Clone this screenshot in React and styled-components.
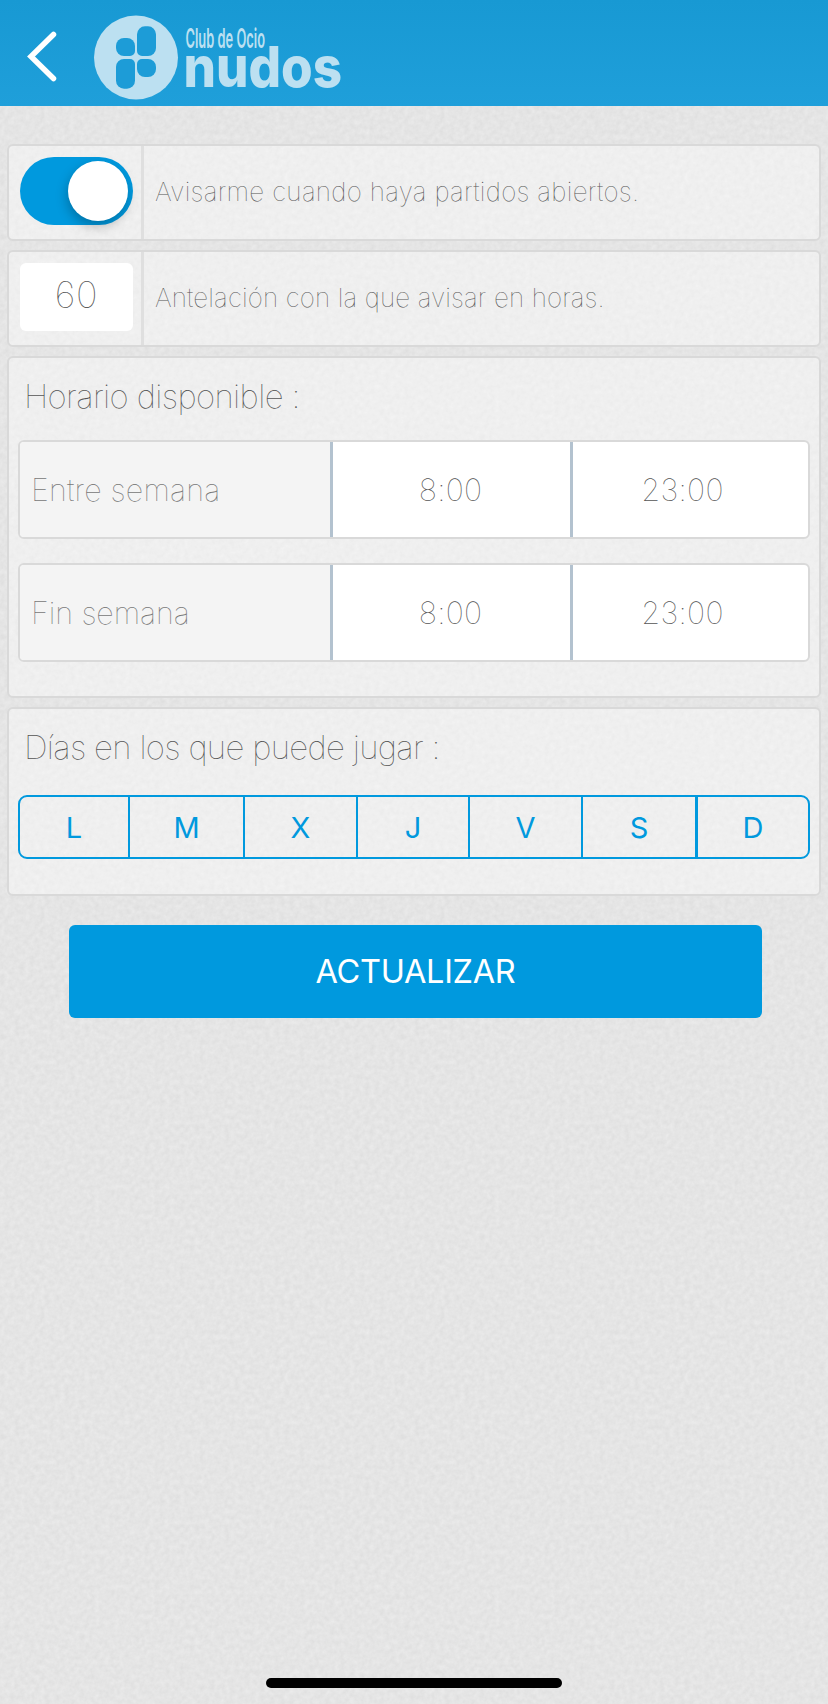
import React, { useState } from 'react';
import styled, { createGlobalStyle } from 'styled-components';

const paper = encodeURIComponent(
    `<svg xmlns="http://www.w3.org/2000/svg" width="400" height="400"><filter id="n" x="0" y="0" width="100%" height="100%" color-interpolation-filters="sRGB"><feTurbulence type="fractalNoise" baseFrequency=".2" numOctaves="3" stitchTiles="stitch"/><feColorMatrix values=".06 0 0 0 .867 .06 0 0 0 .867 .06 0 0 0 .867 0 0 0 0 1"/></filter><rect width="400" height="400" filter="url(#n)"/></svg>`
);

const GlobalStyle = createGlobalStyle`
    * {
        box-sizing: border-box;
    }
    body {
        margin: 0;
        background: #e5e5e5 url("data:image/svg+xml,${paper}");
        font-family: Inter, "Liberation Sans", sans-serif;
        color: #555;
    }
    button, input {
        font-family: inherit;
        margin: 0;
        padding: 0;
        border: 0;
        outline: 0;
        background: none;
    }
`
const Page = styled.div`
    width: 828px;
    height: 1704px;
    display: flex;
    flex-direction: column;
`
const Header = styled.header`
    height: 106px;
    display: flex;
    align-items: flex-start;
    background: linear-gradient(#1899d3, #1f9fda);
`
const BackButton = styled.button`
    width: 38px;
    height: 56px;
    margin: 28px 31px 0 24px;
    svg {
        display: block;
    }
`
const Logo = styled.svg`
    margin-top: 14px;
    overflow: visible;
`
const Content = styled.main`
    flex: 1;
    display: flex;
    flex-direction: column;
    gap: 9px;
    padding: 38px 7px 0;
`
const Card = styled.section`
    border: 2px solid #d9d9d9;
    border-radius: 6px;
    background: rgba(255, 255, 255, .4);
`
const OptionRow = styled(Card)`
    height: 97px;
    display: flex;
`
const OptionControl = styled.div`
    width: 135px;
    padding: 11px 0 0 11px;
    border-right: 3px solid #dfdfdf;
`
const OptionText = styled.p`
    margin: 0;
    padding: 29px 0 0 11px;
    font-size: 26px;
    font-weight: 100;
    line-height: 34px;
    letter-spacing: ${props => props.$spacing};
    white-space: nowrap;
`
const Toggle = styled.button`
    width: 113px;
    height: 68px;
    display: flex;
    align-items: center;
    justify-content: ${props => props.$on ? 'flex-end' : 'flex-start'};
    padding: 0 5px 0 4px;
    border-radius: 34px;
    background: ${props => props.$on ? '#0099de' : '#ccc'};
`
const Knob = styled.span`
    width: 60px;
    height: 60px;
    border-radius: 50%;
    background: #fff;
    box-shadow: -1px 5px 12px rgba(0, 0, 0, .25);
`
const HoursInput = styled.input`
    display: block;
    width: 113px;
    height: 68px;
    padding-bottom: 5px;
    border-radius: 6px;
    background: #fff;
    color: #555;
    font-size: 36.5px;
    font-weight: 100;
    letter-spacing: .6px;
    text-align: center;
`
const ScheduleCard = styled(Card)`
    height: 342px;
    padding: 0 9px;
`
const DaysCard = styled(Card)`
    height: 189px;
    padding: 0 9px;
`
const CardTitle = styled.h2`
    margin: 0;
    padding: 18px 0 0 6px;
    height: ${props => props.$height};
    font-size: 33px;
    font-weight: 100;
    line-height: 40px;
    letter-spacing: ${props => props.$spacing};
    white-space: nowrap;
`
const TimeRow = styled.div`
    height: 99px;
    display: flex;
    overflow: hidden;
    margin-bottom: 24px;
    border: 2px solid #d9d9d9;
    border-radius: 6px;
    background: #fff;
    font-size: 30.5px;
    font-weight: 100;
    line-height: 95px;
`
const TimeLabel = styled.div`
    width: 310px;
    padding-left: 11px;
    background: #f4f4f4;
    color: #777;
    letter-spacing: ${props => props.$spacing};
`
const TimeValue = styled.div`
    width: ${props => props.$width};
    padding-right: ${props => props.$shift};
    border-left: 3px solid #b3c2cf;
    letter-spacing: .3px;
    text-align: center;
`
const Days = styled.div`
    height: 64px;
    display: flex;
    border: 2px solid #0099de;
    border-radius: 9px;
    overflow: hidden;
`
const Day = styled.button`
    width: ${props => props.$width};
    padding-top: 2px;
    border-right: ${props => props.$line} solid #0099de;
    background: ${props => props.$active ? '#0099de' : 'transparent'};
    color: ${props => props.$active ? '#fff' : '#0099de'};
    font-size: 29px;
    line-height: 58px;
`
const UpdateButton = styled.button`
    width: 693px;
    height: 93px;
    margin: 20px 0 0 62px;
    border-radius: 6px;
    background: #0099de;
    color: #fff;
    font-size: 32.5px;
    font-weight: 380;
    letter-spacing: -.3px;
`
const HomeIndicator = styled.div`
    width: 296px;
    height: 10px;
    margin: 0 auto 16px;
    border-radius: 5px;
    background: #000;
`

const schedule = [
    { label: 'Entre semana', from: '8:00', to: '23:00', spacing: '.2px' },
    { label: 'Fin semana', from: '8:00', to: '23:00', spacing: '-.1px' },
];

const days = [
    { name: 'L', width: '110px', line: '2px' },
    { name: 'M', width: '115px', line: '2px' },
    { name: 'X', width: '113px', line: '2px' },
    { name: 'J', width: '112px', line: '2px' },
    { name: 'V', width: '113px', line: '2px' },
    { name: 'S', width: '115px', line: '3px' },
    { name: 'D', width: '110px', line: '0' },
];

const ClubLogo = () => (
    <Logo width="256" height="88" viewBox="93 14 256 88" fill="#bce0f1">
        <circle cx="136" cy="57.5" r="42" />
        <g fill="#1d9cd7">
            <path d="M124 38h3a8 8 0 0 1 8 8v5a5 5 0 0 1-5 5h-6a8 8 0 0 1-8-8v-2a8 8 0 0 1 8-8z" />
            <path d="M145 26.300h3a8 8 0 0 1 8 8V48a8 8 0 0 1-8 8h-6a5 5 0 0 1-5-5V34.300a8 8 0 0 1 8-8z" />
            <path d="M124 59h6a5 5 0 0 1 5 5v16.700a8 8 0 0 1-8 8h-3a8 8 0 0 1-8-8V67a8 8 0 0 1 8-8z" />
            <path d="M142 59h6a8 8 0 0 1 8 8v2a8 8 0 0 1-8 8h-3a8 8 0 0 1-8-8v-5a5 5 0 0 1 5-5z" />
        </g>
        <text x="185.500" y="47.500" fontSize="26.500" fontWeight="600" textLength="79.500" lengthAdjust="spacingAndGlyphs">Club de Ocio</text>
        <text x="183.500" y="87" fontSize="56" fontWeight="800" textLength="158.500" lengthAdjust="spacingAndGlyphs">nudos</text>
    </Logo>
);

const App = () => {
    const [notify, setNotify] = useState(true);
    const [hours, setHours] = useState('60');
    const [selected, setSelected] = useState([]);

    const toggleDay = name => {
        setSelected(selected.includes(name) ? selected.filter(d => d !== name) : [...selected, name]);
    };

    return (
        <Page>
            <GlobalStyle />
            <Header>
                <BackButton aria-label="Atrás">
                    <svg width="38" height="56" viewBox="0 0 38 56" fill="none" stroke="#fff" strokeWidth="5.500">
                        <path d="M29.500 6.500L7 28.500L29.500 50.500" strokeLinecap="round" />
                    </svg>
                </BackButton>
                <ClubLogo />
            </Header>
            <Content>
                <OptionRow>
                    <OptionControl>
                        <Toggle $on={notify} onClick={() => setNotify(!notify)}>
                            <Knob />
                        </Toggle>
                    </OptionControl>
                    <OptionText $spacing=".32px">Avisarme cuando haya partidos abiertos.</OptionText>
                </OptionRow>
                <OptionRow>
                    <OptionControl>
                        <HoursInput value={hours} onChange={e => setHours(e.target.value)} />
                    </OptionControl>
                    <OptionText $spacing=".14px">Antelación con la que avisar en horas.</OptionText>
                </OptionRow>
                <ScheduleCard>
                    <CardTitle $height="82px" $spacing="-.62px">Horario disponible :</CardTitle>
                    {schedule.map(row => (
                        <TimeRow key={row.label}>
                            <TimeLabel $spacing={row.spacing}>{row.label}</TimeLabel>
                            <TimeValue $width="240px" $shift="2px">{row.from}</TimeValue>
                            <TimeValue $width="238px" $shift="16px">{row.to}</TimeValue>
                        </TimeRow>
                    ))}
                </ScheduleCard>
                <DaysCard>
                    <CardTitle $height="86px" $spacing="-.7px">Días en los que puede jugar :</CardTitle>
                    <Days>
                        {days.map(day => (
                            <Day
                                key={day.name}
                                $width={day.width}
                                $line={day.line}
                                $active={selected.includes(day.name)}
                                onClick={() => toggleDay(day.name)}
                            >
                                {day.name}
                            </Day>
                        ))}
                    </Days>
                </DaysCard>
                <UpdateButton>ACTUALIZAR</UpdateButton>
            </Content>
            <HomeIndicator />
        </Page>
    );
};

export default App;
